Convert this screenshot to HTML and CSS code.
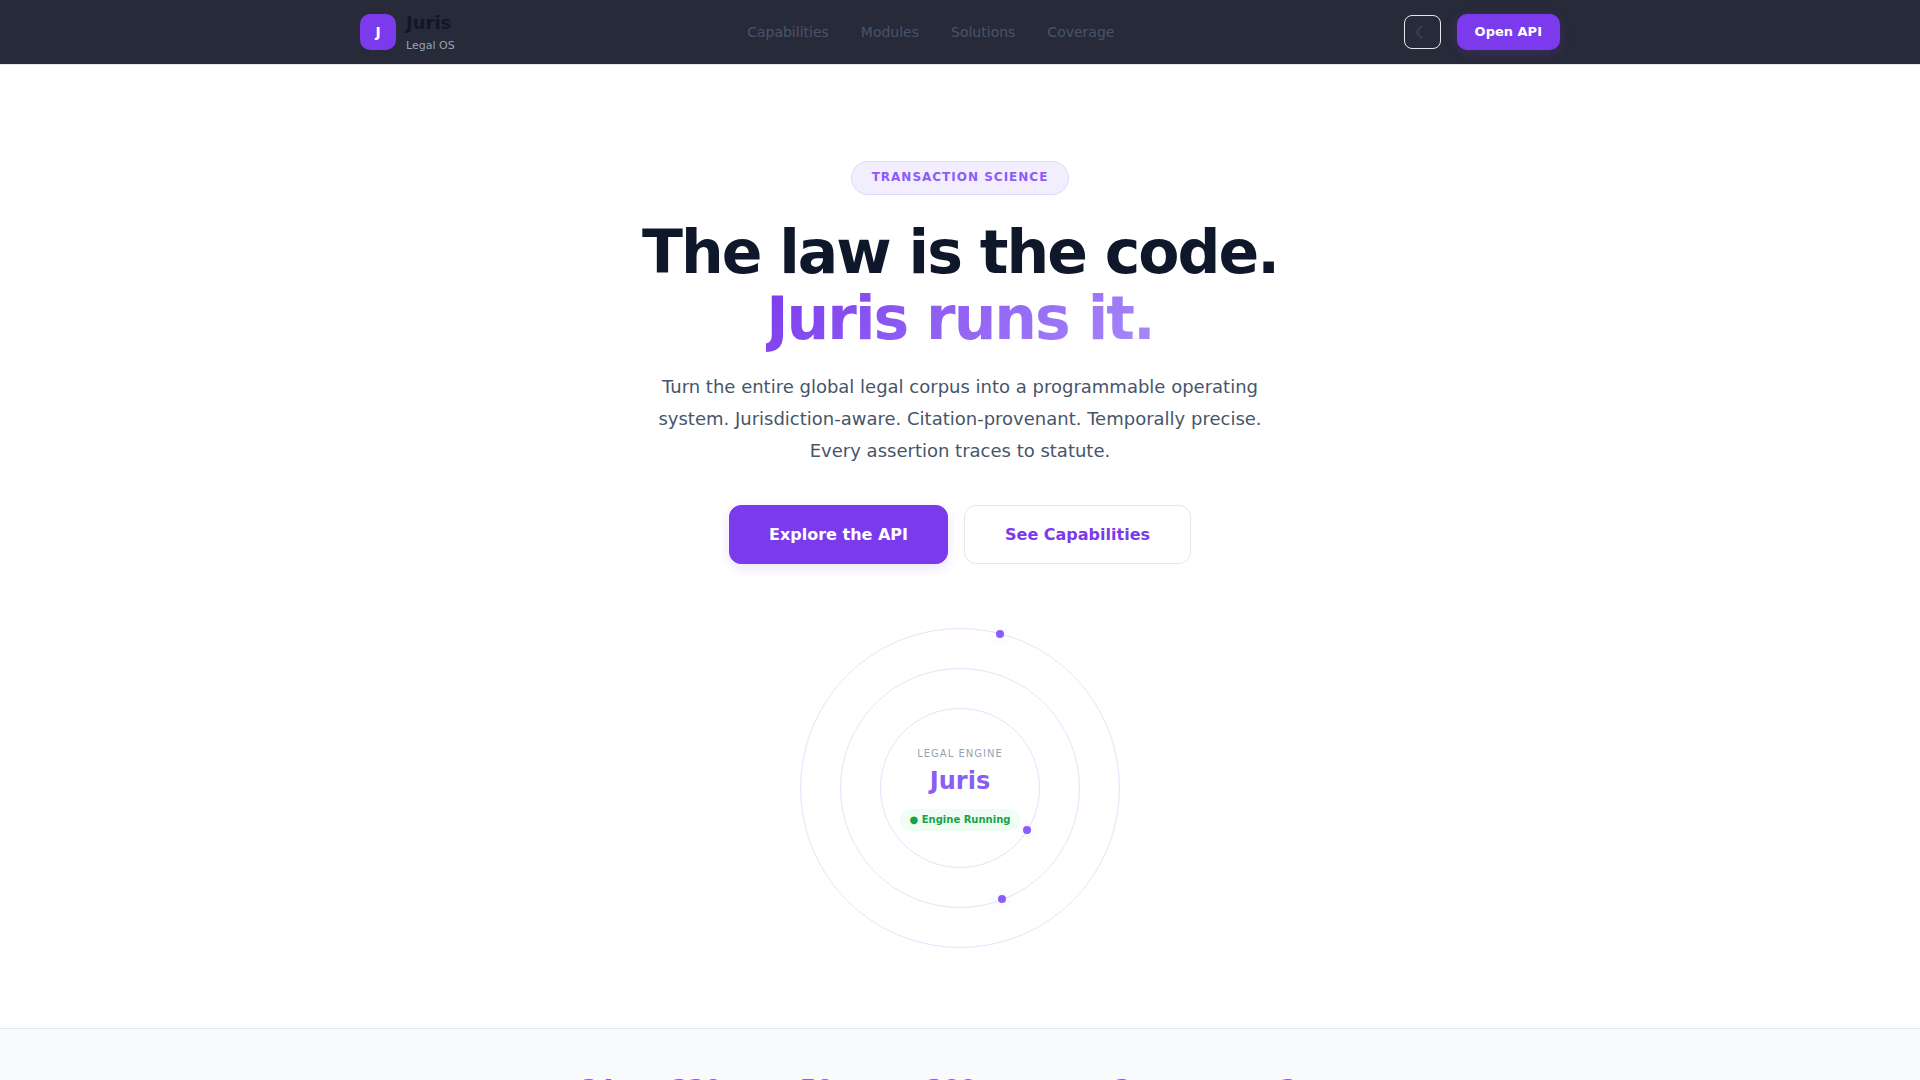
FILE: index.html
```html
<!DOCTYPE html>
<html lang="en">
<head>
    <meta charset="UTF-8">
    <meta name="viewport" content="width=device-width, initial-scale=1.0">
    <title>Juris - Legal OS</title>
    <link rel="stylesheet" href="styles.css">
</head>
<body>

    <header class="header">
        <div class="container header-inner">
            <a href="#" class="logo">
                <span class="logo-mark">J</span>
                <span class="logo-text">
                    <span class="logo-name">Juris</span>
                    <span class="logo-sub">Legal OS</span>
                </span>
            </a>
            <nav class="nav">
                <a href="#capabilities">Capabilities</a>
                <a href="#modules">Modules</a>
                <a href="#solutions">Solutions</a>
                <a href="#coverage">Coverage</a>
            </nav>
            <div class="header-actions">
                <button class="theme-toggle" type="button" aria-label="Toggle theme">☾</button>
                <a href="#api" class="btn-small">Open API</a>
            </div>
        </div>
    </header>

    <section class="hero">
        <div class="badge">TRANSACTION SCIENCE</div>
        <h1>The law is the code.<br><span class="gradient">Juris runs it.</span></h1>
        <p class="hero-sub">Turn the entire global legal corpus into a programmable operating system. Jurisdiction-aware. Citation-provenant. Temporally precise. Every assertion traces to statute.</p>
        <div class="hero-cta">
            <a href="#api" class="btn btn-primary">Explore the API</a>
            <a href="#capabilities" class="btn btn-outline">See Capabilities</a>
        </div>

        <div class="orbit">
            <div class="ring ring-1"></div>
            <div class="ring ring-2"></div>
            <div class="ring ring-3"></div>
            <div class="dot dot-1"></div>
            <div class="dot dot-2"></div>
            <div class="dot dot-3"></div>
            <div class="orbit-center">
                <div class="orbit-label">LEGAL ENGINE</div>
                <div class="orbit-name">Juris</div>
                <div class="orbit-status">● Engine Running</div>
            </div>
        </div>
    </section>

    <section class="stats">
        <div class="stats-row">
            <div class="stat">24</div>
            <div class="stat">230</div>
            <div class="stat">50</div>
            <div class="stat">200</div>
            <div class="stat">2</div>
            <div class="stat">3</div>
        </div>
    </section>

</body>
</html>
```

FILE: styles.css
```css
* {
    margin: 0;
    padding: 0;
    box-sizing: border-box;
}

body {
    font-family: "DejaVu Sans", sans-serif;
    font-size: 16px;
    line-height: 27px;
    color: #0f172a;
    background: #fff;
}

a {
    text-decoration: none;
    color: inherit;
}

.container {
    max-width: 1200px;
    margin: 0 auto;
}

/* Header */
.header {
    background: #272a39;
    border-bottom: 1px solid #e2e8f0;
}

.header-inner {
    display: flex;
    align-items: center;
    justify-content: space-between;
    height: 64px;
}

.logo {
    display: flex;
    align-items: center;
    gap: 10px;
}

.logo-mark {
    width: 36px;
    height: 36px;
    border-radius: 10px;
    background: #7c3aed;
    color: #fff;
    font-size: 14px;
    font-weight: 700;
    line-height: 36px;
    text-align: center;
}

.logo-text {
    display: flex;
    flex-direction: column;
    min-width: 52px;
}

.logo-name {
    font-size: 18px;
    font-weight: 700;
    line-height: 26px;
}

.logo-sub {
    font-size: 11px;
    line-height: 19px;
    color: #94a3b8;
}

.nav {
    display: flex;
    gap: 32px;
    font-size: 14px;
    color: #475569;
}

.header-actions {
    display: flex;
    align-items: center;
    gap: 16px;
}

.theme-toggle {
    width: 37px;
    height: 34px;
    border: 1px solid #e2e8f0;
    border-radius: 8px;
    background: transparent;
    color: #475569;
    font-family: inherit;
    font-size: 16px;
}

.btn-small {
    padding: 0 18px;
    border-radius: 10px;
    background: #7c3aed;
    color: #fff;
    font-size: 13px;
    font-weight: 600;
    line-height: 36px;
    box-shadow: 0 2px 12px rgba(124, 58, 237, 0.25);
}

/* Hero */
.hero {
    display: flex;
    flex-direction: column;
    align-items: center;
    padding: 96px 24px 80px;
    text-align: center;
}

.badge {
    padding: 5px 20px 7px;
    margin-bottom: 24px;
    border: 1px solid #ddd6fe;
    border-radius: 20px;
    background: #f3eefe;
    color: #8b5cf6;
    font-size: 12px;
    font-weight: 700;
    line-height: 20px;
    letter-spacing: 1px;
}

h1 {
    margin-bottom: 20px;
    font-size: 60px;
    font-weight: 800;
    line-height: 66px;
    letter-spacing: -2px;
}

.gradient {
    background: linear-gradient(135deg, #7c3aed, #a78bfa);
    -webkit-background-clip: text;
    background-clip: text;
    color: transparent;
}

.hero-sub {
    max-width: 640px;
    margin-bottom: 38px;
    font-size: 18px;
    line-height: 32px;
    color: #475569;
}

.hero-cta {
    display: flex;
    gap: 16px;
    margin-bottom: 64px;
}

.btn {
    padding: 15px 40px;
    border: 1px solid #7c3aed;
    border-radius: 12px;
    font-weight: 600;
}

.btn-primary {
    padding: 15px 39px;
    background: #7c3aed;
    color: #fff;
    box-shadow: 0 4px 12px rgba(124, 58, 237, 0.15);
}

.btn-outline {
    border-color: #e2e8f0;
    color: #7c3aed;
}

/* Orbit */
.orbit {
    position: relative;
    display: flex;
    align-items: center;
    justify-content: center;
    width: 320px;
    height: 320px;
}

.ring {
    position: absolute;
    border: 1px solid #e8e1fd;
    border-radius: 50%;
}

.ring-1 { inset: 0; }
.ring-2 { inset: 40px; }
.ring-3 { inset: 80px; }

.dot {
    position: absolute;
    width: 8px;
    height: 8px;
    border-radius: 50%;
    background: #8b5cf6;
    box-shadow: 0 0 12px rgba(139, 92, 246, 0.2);
}

.dot-1 { left: 196px; top: 2px; }
.dot-2 { left: 198px; top: 267px; }
.dot-3 { left: 223px; top: 198px; }

.orbit-label {
    font-size: 10px;
    line-height: 17px;
    letter-spacing: 1px;
    color: #94a3b8;
}

.orbit-name {
    font-size: 24px;
    font-weight: 800;
    line-height: 38px;
    color: #8b5cf6;
}

.orbit-status {
    padding: 2px 10px 3px;
    margin-top: 9px;
    border-radius: 12px;
    background: #f0fdf4;
    color: #16a34a;
    font-size: 10px;
    font-weight: 600;
    line-height: 17px;
}

/* Stats */
.stats {
    padding: 40px 24px;
    border-top: 1px solid #e2e8f0;
    background: #f8fafc;
}

.stats-row {
    display: grid;
    grid-template-columns: 35px 82px 78px 112px 150px 102px;
    justify-content: center;
    gap: 40px;
}

.stat {
    color: #8b5cf6;
    font-size: 24px;
    font-weight: 800;
    line-height: 41px;
    text-align: center;
}
```
